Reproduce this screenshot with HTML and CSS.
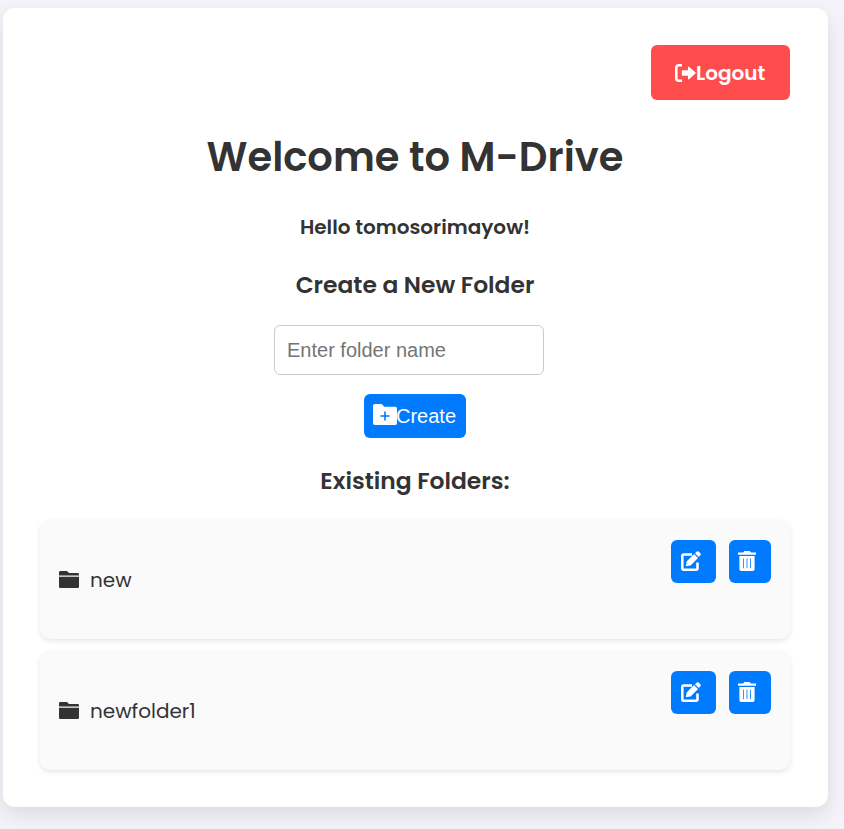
FILE: index.html
```html
<!DOCTYPE html>
<html lang="en">
<head>
<meta charset="utf-8">
<title>M-Drive</title>
<link rel="stylesheet" href="styles.css">
</head>
<body>
<svg class="sprite" aria-hidden="true">
  <symbol id="folder" viewBox="0 0 20 17"><path d="M0 4.5V1.3Q0 0 1.3 0H8L10 2H18.7Q20 2 20 3.3V4.5ZM0 5.7H20V15.7Q20 17 18.7 17H1.3Q0 17 0 15.7Z"/></symbol>
  <symbol id="edit" viewBox="0 0 20 20"><path d="M11 3.5H2.7Q1.3 3.5 1.3 4.9V17.3Q1.3 18.7 2.7 18.7H15.1Q16.5 18.7 16.5 17.3V11.5" fill="none" stroke="currentColor" stroke-width="2.6"/><path d="M4.8 15.2 5.6 10.4 13 3 17 7 9.6 14.4ZM14 2.3 15.9.5Q16.9-.2 17.7.6L19.5 2.4Q20.3 3.2 19.5 4L17.8 6.1Z"/></symbol>
  <symbol id="trash" viewBox="0 0 18 20"><path fill-rule="evenodd" d="M0 1.4H5.3L6.2 0H11.8L12.7 1.4H18V3.7H0ZM1.4 5H16.6V18.2Q16.6 20 14.8 20H3.2Q1.4 20 1.4 18.2ZM5 7.6V17.2H5.8V7.6ZM8.6 7.6V17.2H9.4V7.6ZM12.2 7.6V17.2H13V7.6Z"/></symbol>
</svg>
<main class="card">
  <div class="topbar">
    <button class="logout"><svg class="logout-icon" viewBox="0 0 21 18"><path d="M7 1.3H3.8Q1.3 1.3 1.3 3.8V14.2Q1.3 16.7 3.8 16.7H7" fill="none" stroke="currentColor" stroke-width="2.6"/><path d="M7.5 6.2H13V3Q13.2 2.2 14 2.7L20.5 8.4Q21 9 20.5 9.6L14 15.3Q13.2 15.8 13 15V11.8H7.5Q6.8 11.8 6.8 11.1V6.9Q6.8 6.2 7.5 6.2Z"/></svg><span>Logout</span></button>
  </div>
  <h1>Welcome to M-Drive</h1>
  <p class="hello">Hello tomosorimayow!</p>
  <h2 class="create-title">Create a New Folder</h2>
  <form class="create-form">
    <input type="text" placeholder="Enter folder name">
    <button type="button" class="create"><svg class="create-icon" viewBox="0 0 24 21"><path fill-rule="evenodd" d="M0 1.8Q0 0 1.8 0H8.6L11.4 2.7H22.2Q24 2.7 24 4.5V19.2Q24 21 22.2 21H1.8Q0 21 0 19.2ZM11.2 7.5V11.2H7.5V12.8H11.2V16.5H12.8V12.8H16.5V11.2H12.8V7.5Z"/></svg><span>Create</span></button>
  </form>
  <h2 class="existing-title">Existing Folders:</h2>
  <ul class="folders">
    <li><div class="name"><svg class="folder-icon"><use href="#folder"/></svg><span>new</span></div><div class="actions"><button class="edit"><svg><use href="#edit"/></svg></button><button class="delete"><svg><use href="#trash"/></svg></button></div></li>
    <li><div class="name"><svg class="folder-icon"><use href="#folder"/></svg><span>newfolder1</span></div><div class="actions"><button class="edit"><svg><use href="#edit"/></svg></button><button class="delete"><svg><use href="#trash"/></svg></button></div></li>
  </ul>
</main>
</body>
</html>
```
FILE: styles.css
```css
* { box-sizing: border-box; }
body {
  margin: 0;
  padding: 8px 16px 22px 3px;
  height: 829px;
  overflow: hidden;
  background: #f3f3f9;
  color: #333;
  font-family: Poppins, Inter, sans-serif;
}
.sprite { display: none; }
svg { display: block; fill: currentColor; flex: none; }
button { border: 0; padding: 0; color: #fff; border-radius: 6px; }
.card {
  width: 825px;
  height: 799px;
  padding: 37px 38px 0 37px;
  border-radius: 12px;
  background: #fff;
  box-shadow: 0 8px 20px rgba(0, 0, 0, .1);
}
.topbar { display: flex; justify-content: flex-end; }
.logout {
  width: 139px;
  height: 55px;
  padding-left: 24px;
  display: flex;
  align-items: center;
  background: #ff4d4d;
  font: 600 20px Poppins, Inter, sans-serif;
}
.logout-icon { width: 21px; height: 18px; }
.logout span { padding-top: 1px; }
h1, h2, p, ul { margin: 0; padding: 0; }
h1, h2, .hello { text-align: center; white-space: nowrap; font-weight: 600; }
h1 { margin-top: 27px; font-size: 40px; line-height: 60px; }
.hello { margin-top: 25px; font-size: 20px; line-height: 30px; }
h2 { font-size: 23.4px; line-height: 36px; }
.create-title { margin-top: 25px; }
.create-form { display: flex; flex-direction: column; align-items: center; margin-top: 22px; }
input {
  width: 270px;
  height: 50px;
  margin-right: 12px;
  padding: 0 12px;
  border: 1px solid #ccc;
  border-radius: 6px;
  background: #fff;
  font: 20px "Liberation Sans", Arial, sans-serif;
}
input::placeholder { color: #757575; }
.create {
  width: 102px;
  height: 44px;
  margin-top: 19px;
  padding-left: 9px;
  display: flex;
  align-items: center;
  background: #007bff;
  font: 20px "Liberation Sans", Arial, sans-serif;
}
.create-icon { width: 24px; height: 21px; margin-top: -3px; }
.create span { margin-left: -1px; }
.existing-title { margin-top: 25px; }
.folders { margin-top: 21px; list-style: none; display: grid; gap: 12px; }
.folders li {
  height: 119px;
  padding: 20px 19px;
  display: flex;
  justify-content: space-between;
  border-radius: 10px;
  background: #fafafa;
  box-shadow: 0 2px 5px rgba(0, 0, 0, .1);
}
.name { display: flex; align-items: center; gap: 11px; font-size: 20px; }
.name span { padding-top: 1px; }
.folder-icon { width: 20px; height: 17px; }
.actions { display: flex; gap: 13px; }
.actions button { height: 43px; padding: 11px 0 0 10px; background: #007bff; }
.actions .edit { width: 45px; }
.actions .delete { width: 42px; padding-left: 9px; }
.actions button svg { width: 20px; height: 20px; margin-bottom: 12px; }
.actions .delete svg { width: 18px; }
```
